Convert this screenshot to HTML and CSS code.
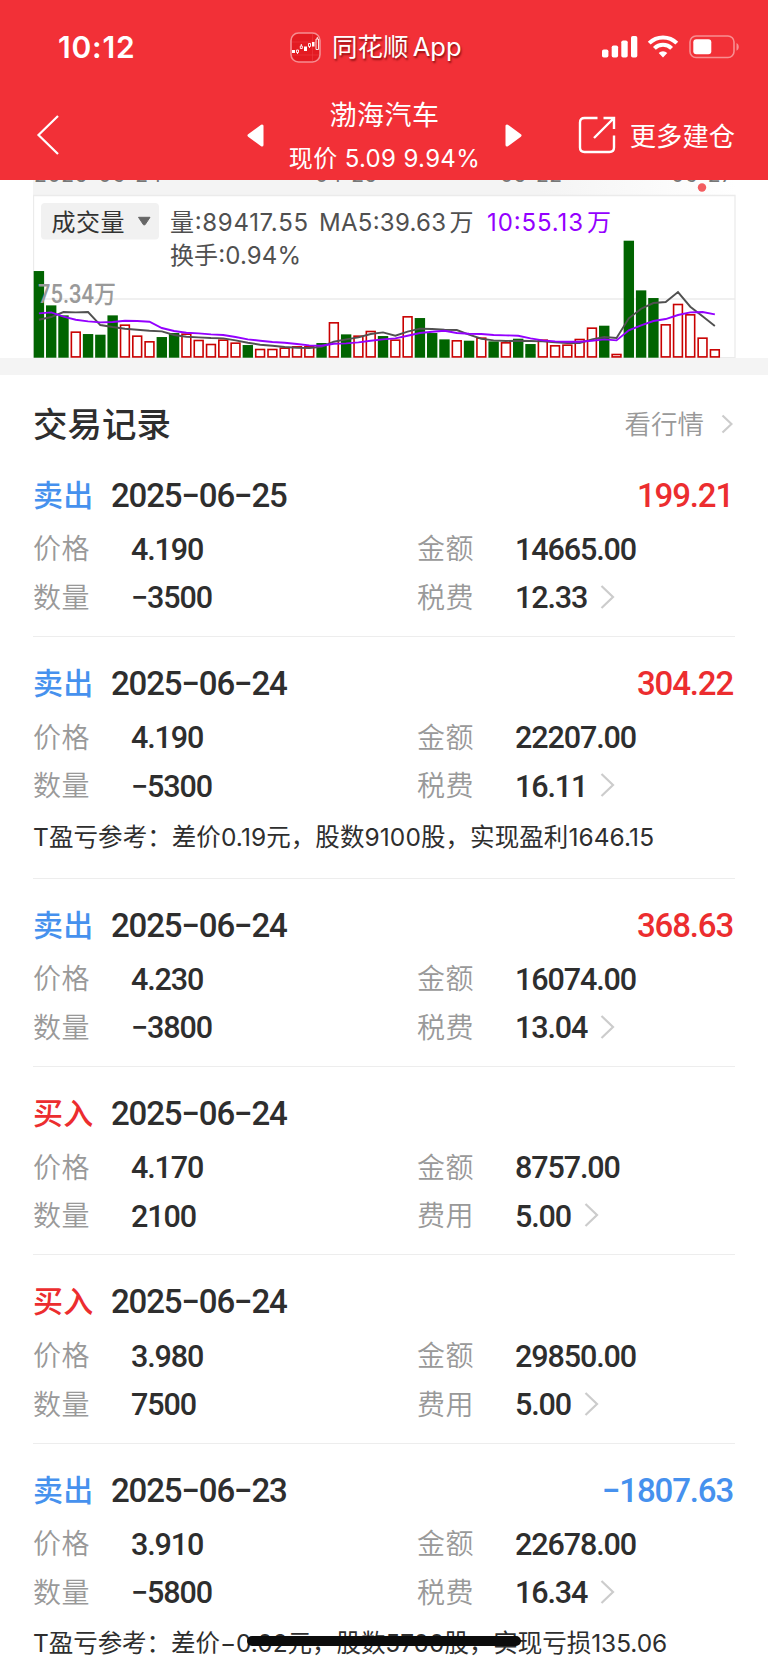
FILE: index.html
```html
<!doctype html>
<html lang="zh-CN">
    <head>
        <meta charset="utf-8">
        <title>渤海汽车</title>
        <link rel="stylesheet" href="styles.css">
    </head>

    <body>
        <header class="header">
            <div class="status">
                <span class="time">10:12</span>
                <div class="app">
                    <svg class="app-icon" width="31" height="31" viewBox="0 0 31 31">
                        <rect x="1" y="1" width="29" height="29" rx="7.5" fill="#e31b22" stroke="#f68d91" stroke-width="1.6" />
                        <path d="M2 10H29M2 23H29M22.5 2V29" stroke="#ee3c43" stroke-width=".6" />
                        <path d="M2 18h3v3h-3zM14 14.500h3v4.500h-3zM22 10h2.500v4.500h-2.500z" fill="#fff" />
                        <path d="M6.500 18h2v2.500h-2zM10.300 14h2v2.500h-2zM11.300 12v2M7.500 20.500v1.500M18.500 11.500h2v3h-2zM19.500 14.500v1.500M26 7h2.500v10.500h-2.500zM27.300 5v2" fill="none" stroke="#fff" stroke-width=".9" />
                    </svg>
                    <span class="app-name">同花顺 <i>App</i></span>
                </div>
                <svg class="system" width="138" height="24" viewBox="0 0 138 24">
                    <g fill="#fff">
                        <rect x="0" y="14.500" width="6.400" height="8" rx="1.800" />
                        <rect x="9.700" y="10.500" width="6.400" height="12" rx="1.800" />
                        <rect x="19.300" y="5.500" width="6.400" height="17" rx="1.800" />
                        <rect x="29" y="1" width="6.300" height="21.500" rx="1.800" />
                        <path d="M61 22.500l-4.300-4.400a6.200 6.200 0 0 1 8.600 0z" />
                    </g>
                    <path d="M52.400 13.400a12.200 12.200 0 0 1 17.200 0M47.200 8.200a19.500 19.500 0 0 1 27.600 0" fill="none" stroke="#fff" stroke-width="4" />
                    <rect x="88" y="1" width="44" height="21.500" rx="6" fill="none" stroke="#f88e91" stroke-width="1.600" />
                    <rect x="91.300" y="4.300" width="18" height="15" rx="3" fill="#fff" />
                    <path d="M134.500 8c3 1.200 3 6.500 0 7.700z" fill="#f88e91" />
                </svg>
            </div>
            <nav class="nav">
                <svg class="back" width="24" height="42" viewBox="0 0 24 42">
                    <path d="M22 2L2.500 21L22 40" fill="none" stroke="#fff" stroke-width="2.200" />
                </svg>
                <div class="stock">
                    <svg width="17" height="23" viewBox="0 0 17 23"><path d="M15 2v19L2 11.500z" fill="#fff" stroke="#fff" stroke-width="3" stroke-linejoin="round" /></svg>
                    <div class="stock-info">
                        <div class="stock-name">渤海汽车</div>
                        <div class="stock-price">现价 5.09 9.94%</div>
                    </div>
                    <svg width="17" height="23" viewBox="0 0 17 23"><path d="M2 2v19L15 11.500z" fill="#fff" stroke="#fff" stroke-width="3" stroke-linejoin="round" /></svg>
                </div>
                <div class="more">
                    <svg width="38" height="38" viewBox="0 0 38 38" fill="none" stroke="#fff" stroke-width="2.400">
                        <path d="M19.500 2H6.500Q2 2 2 6.500V31.500Q2 36 6.500 36H31.500Q36 36 36 31.500V19.500" />
                        <path d="M25.500 2H36V13M35 3L16 22" />
                    </svg>
                    <span>更多建仓</span>
                </div>
            </nav>
        </header>

        <section class="chart">
            <svg id="volume" width="703" height="178" viewBox="33 180 703 178">
                <defs>
                    <linearGradient id="fade">
                        <stop offset="0" stop-color="#f4f4f4" />
                        <stop offset=".72" stop-color="#f4f4f4" />
                        <stop offset="1" stop-color="#fff" />
                    </linearGradient>
                </defs>
                <rect x="33" y="180" width="703" height="15" fill="url(#fade)" />
                <g class="dates">
                    <text x="34" y="181.500" textLength="128">2025-06-24</text>
                    <text x="315" y="181.500" textLength="62">04-25</text>
                    <text x="500" y="181.500" textLength="62">05-22</text>
                    <text x="671" y="181.500" textLength="62">06-27</text>
                </g>
                <circle cx="702" cy="187.500" r="4.200" fill="#f35d60" />
                <path d="M33.500 358V195.500H735V358M33 299H735M33 357.700H735" fill="none" stroke="#ebebeb" stroke-width="1.300" />
                <g id="bars"></g>
                <text class="scale" x="38" y="303" textLength="78" lengthAdjust="spacingAndGlyphs">75.34万</text>
                <polyline id="ma5" fill="none" stroke="#505050" stroke-width="1.900" />
                <polyline id="ma10" fill="none" stroke="#9400ff" stroke-width="1.900" />
                <rect x="41" y="203" width="118" height="36.500" rx="4" fill="#f1f1f1" />
                <path d="M138.500 217.300h11.500l-5 7.500h-1.500z" fill="#666" stroke="#666" stroke-width="1" stroke-linejoin="round" />
                <g class="legend">
                    <text class="kind" x="51.500" y="230.500" textLength="73">成交量</text>
                    <text x="170" y="231" textLength="138">量:89417.55</text>
                    <text x="319" y="231" textLength="127">MA5:39.63</text>
                    <text x="449.500" y="231">万</text>
                    <text class="purple" x="487" y="231" textLength="96">10:55.13</text>
                    <text class="purple" x="587" y="231">万</text>
                    <text x="170" y="264" textLength="131">换手:0.94%</text>
                </g>
            </svg>
        </section>

        <main class="records">
            <div class="records-head">
                <h2>交易记录</h2>
                <a class="quotes">看行情
                    <svg width="12" height="20" viewBox="0 0 12 20"><path d="M1.500 1.500L10.500 10L1.500 18.500" /></svg>
                </a>
            </div>

            <article class="trade">
                <div class="trade-head"><b class="sell">卖出</b><span>2025−06−25</span><em class="up">199.21</em></div>
                <dl>
                    <dt>价格</dt><dd>4.190</dd><dt>金额</dt><dd>14665.00</dd>
                    <dt>数量</dt><dd>−3500</dd><dt>税费</dt><dd>12.33 <svg width="15" height="26" viewBox="0 0 15 26"><path d="M1.500 2L13 13L1.500 24" /></svg></dd>
                </dl>
            </article>

            <article class="trade">
                <div class="trade-head"><b class="sell">卖出</b><span>2025−06−24</span><em class="up">304.22</em></div>
                <dl>
                    <dt>价格</dt><dd>4.190</dd><dt>金额</dt><dd>22207.00</dd>
                    <dt>数量</dt><dd>−5300</dd><dt>税费</dt><dd>16.11 <svg width="15" height="26" viewBox="0 0 15 26"><path d="M1.500 2L13 13L1.500 24" /></svg></dd>
                </dl>
                <p class="note">T盈亏参考：差价0.19元，股数9100股，实现盈利1646.15</p>
            </article>

            <article class="trade">
                <div class="trade-head"><b class="sell">卖出</b><span>2025−06−24</span><em class="up">368.63</em></div>
                <dl>
                    <dt>价格</dt><dd>4.230</dd><dt>金额</dt><dd>16074.00</dd>
                    <dt>数量</dt><dd>−3800</dd><dt>税费</dt><dd>13.04 <svg width="15" height="26" viewBox="0 0 15 26"><path d="M1.500 2L13 13L1.500 24" /></svg></dd>
                </dl>
            </article>

            <article class="trade">
                <div class="trade-head"><b class="buy">买入</b><span>2025−06−24</span></div>
                <dl>
                    <dt>价格</dt><dd>4.170</dd><dt>金额</dt><dd>8757.00</dd>
                    <dt>数量</dt><dd>2100</dd><dt>费用</dt><dd>5.00 <svg width="15" height="26" viewBox="0 0 15 26"><path d="M1.500 2L13 13L1.500 24" /></svg></dd>
                </dl>
            </article>

            <article class="trade">
                <div class="trade-head"><b class="buy">买入</b><span>2025−06−24</span></div>
                <dl>
                    <dt>价格</dt><dd>3.980</dd><dt>金额</dt><dd>29850.00</dd>
                    <dt>数量</dt><dd>7500</dd><dt>费用</dt><dd>5.00 <svg width="15" height="26" viewBox="0 0 15 26"><path d="M1.500 2L13 13L1.500 24" /></svg></dd>
                </dl>
            </article>

            <article class="trade">
                <div class="trade-head"><b class="sell">卖出</b><span>2025−06−23</span><em class="down">−1807.63</em></div>
                <dl>
                    <dt>价格</dt><dd>3.910</dd><dt>金额</dt><dd>22678.00</dd>
                    <dt>数量</dt><dd>−5800</dd><dt>税费</dt><dd>16.34 <svg width="15" height="26" viewBox="0 0 15 26"><path d="M1.500 2L13 13L1.500 24" /></svg></dd>
                </dl>
                <p class="note last">T盈亏参考：差价−0.02元，股数5700股，实现亏损135.06</p>
            </article>
        </main>
        <div class="home-bar"></div>

        <script>
            // bar heights in thirds of a pixel, g = down day, r = up day
            const BARS = 'g260 g157 g127 r79 g71 g69 g127 r100 r67 r50 g62 g74 r73 r54 r42 r55 r46 g38 r27 r27 r31 r35 r35 g44 r107 g70 r67 r81 g65 r55 r125 g119 g74 g55 r53 g51 r61 g49 r47 g57 g41 r55 r38 r40 r57 r91 g96 r12 g351 g202 g179 r101 r162 r131 r61 r26';
            const MA5 = [114, 122, 137, 136, 137, 98, 92, 87, 84, 81, 79, 68, 63, 61, 59, 58, 52, 45, 39, 36, 32, 30, 29, 33, 48, 55, 61, 71, 76, 66, 78, 87, 86, 84, 83, 69, 57, 52, 50, 51, 50, 49, 46, 44, 44, 55, 62, 59, 118, 147, 164, 167, 197, 153, 124, 95];
            const MA10 = [133, 136, 123, 114, 109, 106, 107, 111, 110, 108, 89, 80, 75, 73, 70, 68, 62, 55, 51, 47, 45, 41, 37, 36, 42, 43, 46, 51, 55, 58, 66, 74, 78, 81, 74, 72, 71, 68, 67, 66, 58, 52, 49, 48, 48, 51, 55, 52, 82, 97, 110, 116, 128, 136, 137, 130];
            const LEFT = 33.7;
            const STEP = 12.29;
            const BASE = 357.7;

            document.getElementById('bars').innerHTML = BARS.split(' ').map((bar, i) => {
                const height = bar.slice(1) / 3;
                const x = LEFT + STEP * i;
                return bar[0] === 'g'
                    ? `<rect x="${x}" y="${BASE - height}" width="10.4" height="${height}" fill="#006400" />`
                    : `<rect x="${x + 0.8}" y="${BASE - height + 0.8}" width="8.8" height="${height - 1.6}" fill="#fff" stroke="#c90000" stroke-width="1.6" />`;
            }).join('');

            function drawLine(id, values) {
                const points = values.map((v, i) => `${LEFT + 5.2 + STEP * i},${BASE - v / 3}`);
                document.getElementById(id).setAttribute('points', points.join(' '));
            }
            drawLine('ma5', MA5);
            drawLine('ma10', MA10);
        </script>
    </body>
</html>
```
FILE: styles.css
```css
* {
    box-sizing: border-box;
}
body {
    position: relative;
    margin: 0;
    height: 1663px;
    overflow: hidden;
    background: #fff;
    color: #2e2e2e;
    font-family: Inter, 'Noto Sans CJK SC', sans-serif;
}
.header {
    height: 180px;
    background: #f23037;
    color: #fff;
}
.status {
    display: grid;
    grid-template-columns: 232px 1fr auto;
    align-items: center;
    height: 94px;
    padding: 0 28px 0 58px;
}
.time {
    font-size: 30px;
    font-weight: 600;
    letter-spacing: .8px;
}
.app {
    display: flex;
    align-items: center;
    gap: 11px;
}
.app-name {
    font-size: 25.5px;
    font-weight: 390;
    line-height: 32px;
    text-shadow: 1px 2px 2px rgba(90, 0, 0, .65);
    white-space: nowrap;
}
.app-name i {
    font-style: normal;
    margin-left: -3px;
}
.nav {
    display: grid;
    grid-template-columns: 211px 275px 1fr;
    height: 86px;
    padding: 0 33px 0 36px;
    font-weight: 390;
}
.back {
    margin-top: 20px;
}
.stock {
    display: flex;
    justify-content: space-between;
    padding-top: 30px;
}
.stock-info {
    margin-top: -30px;
    text-align: center;
    white-space: nowrap;
}
.stock-name {
    margin-top: 4px;
    font-size: 27px;
    line-height: 36px;
    letter-spacing: .5px;
}
.stock-price {
    margin-top: 8px;
    font-size: 24px;
    line-height: 34px;
    letter-spacing: .35px;
}
.more {
    display: flex;
    align-items: center;
    justify-content: flex-end;
    height: 82px;
    gap: 14px;
    font-size: 26.3px;
    white-space: nowrap;
}
.more span {
    margin-top: -2px;
}
.chart {
    height: 195px;
    padding-left: 33px;
    border-bottom: 17px solid #f4f4f4;
}
.chart svg {
    display: block;
}
.dates {
    font-size: 21px;
    fill: #777;
}
.scale {
    font-family: Roboto, 'Noto Sans CJK SC', sans-serif;
    font-size: 25px;
    font-weight: 500;
    fill: #999;
}
.legend {
    font-size: 24px;
    font-weight: 390;
    fill: #505050;
}
.legend .kind {
    fill: #333;
}
.legend .purple {
    fill: #9400ff;
}

.records {
    padding: 0 33px;
}
.records-head {
    display: flex;
    align-items: center;
    justify-content: space-between;
    height: 73.6px;
    padding-top: 24px;
}
h2 {
    margin: 2px 0 0;
    font-size: 34.5px;
    font-weight: 500;
    line-height: 50px;
}
.quotes {
    display: flex;
    align-items: center;
    gap: 17px;
    padding-right: 2px;
    color: #999;
    font-size: 26.5px;
    font-weight: 350;
    line-height: 40px;
}
.records svg path {
    fill: none;
    stroke: #ccc;
    stroke-width: 2.2;
}
.trade {
    padding: 19px 0 13.65px;
    border-bottom: 1px solid #ededed;
}
.trade-head {
    display: flex;
    align-items: center;
    height: 53px;
    margin-bottom: 4.75px;
    font: 500 33px/53px Roboto, sans-serif;
    letter-spacing: -1.15px;
}
.trade-head span,
.trade-head em {
    padding-top: 2px;
}
.trade-head b {
    width: 78px;
    margin-top: -2px;
    font: 500 30px/53px 'Noto Sans CJK SC', sans-serif;
    letter-spacing: .3px;
}
.trade-head em {
    margin-left: auto;
    padding-right: 2px;
    font-style: normal;
}
.sell,
.down {
    color: #4691ee;
}
.buy,
.up {
    color: #ec2d2f;
}
dl {
    display: grid;
    grid-template-columns: 98px 286px 98px 1fr;
    grid-auto-rows: 48.5px;
    margin: 0;
    line-height: 48.5px;
}
dt {
    color: #999;
    font-size: 28px;
    font-weight: 350;
    letter-spacing: .4px;
}
dd {
    display: flex;
    align-items: center;
    gap: 13px;
    margin: 0;
    padding-top: 1px;
    font-family: Roboto, sans-serif;
    font-size: 30.5px;
    font-weight: 500;
    letter-spacing: -1.1px;
}
dd svg {
    margin-top: -3px;
}
.note {
    height: 53.2px;
    margin: 0;
    padding-top: 1px;
    font-size: 24.5px;
    font-weight: 370;
    line-height: 50px;
    letter-spacing: .08px;
    white-space: nowrap;
}
.note.last {
    letter-spacing: -.05px;
}
.home-bar {
    position: absolute;
    left: 247px;
    top: 1636px;
    width: 274px;
    height: 10px;
    border-radius: 5px;
    background: #0c0c0c;
}
```
